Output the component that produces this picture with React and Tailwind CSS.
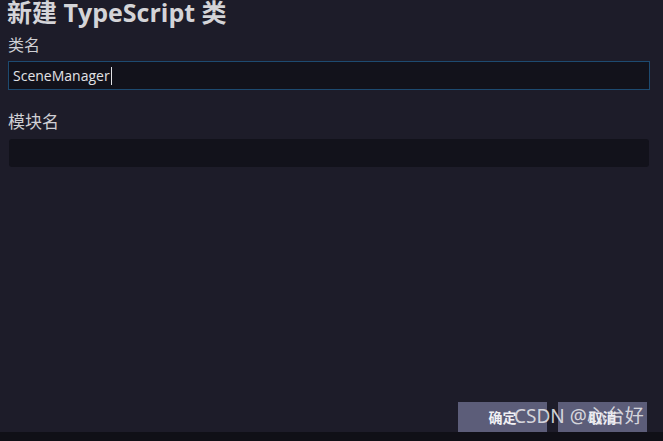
export default function App() {
  return (
    <div className="relative flex h-[441px] w-[663px] flex-col overflow-hidden bg-[#1d1c29] font-['Open_Sans','Noto_Sans_CJK_SC',sans-serif]">
      <div className="flex flex-1 flex-col px-[8px]">
        <h1 className="-mt-[5px] h-[35px] -ml-[1px] text-[25px] font-bold leading-[35px] text-[#d4d4d8]">新建 TypeScript 类</h1>
        <label className="mt-[3px] h-[24px] text-[16px] leading-[24px] text-[#cfcfd4]">类名</label>
        <div className="mt-[4px] flex h-[29px] w-[642px] items-center border border-[#1d4a70] bg-[#12121b] pl-[4px]">
          <span className="text-[14px] text-[#e2e2e6]">SceneManager</span>
          <span className="ml-[1px] h-[18px] w-px bg-[#e2e2e6]" />
        </div>
        <label className="mt-[19px] h-[26px] text-[17px] leading-[26px] text-[#cfcfd4]">模块名</label>
        <div className="ml-[1px] mt-[4px] h-[28px] w-[640px] rounded-[3px] bg-[#12121b]" />
        <div className="flex-1" />
        <div className="flex justify-end gap-[11px] pr-[8px]">
          <button className="h-[30px] w-[89px] bg-[#5c5d79] text-[14px] font-bold text-[#f0f0f4]">确定</button>
          <button className="h-[30px] w-[89px] bg-[#5c5d79] text-[14px] font-bold text-[#f0f0f4]">取消</button>
        </div>
      </div>
      <div className="h-[9px] bg-[#101017]" />
      <div className="absolute left-[514px] top-[403px] text-[19px] leading-[26px] text-[#e6e6ea]/90 font-['Noto_Sans','Noto_Sans_CJK_SC',sans-serif]">CSDN @心台好</div>
    </div>
  );
}
